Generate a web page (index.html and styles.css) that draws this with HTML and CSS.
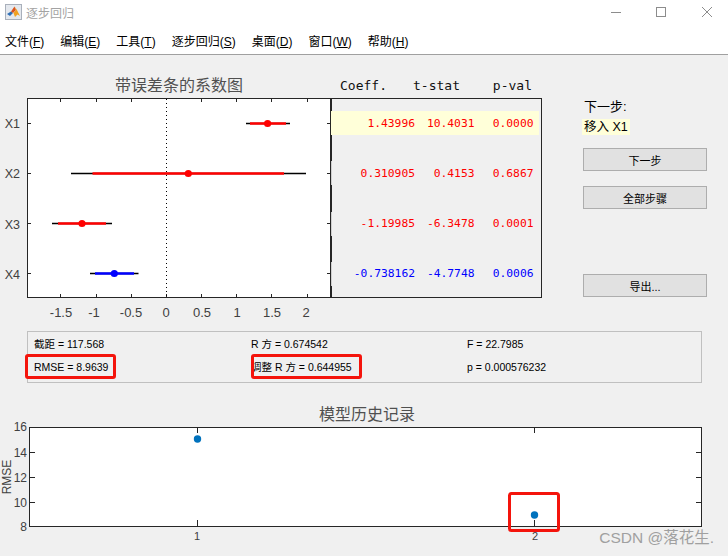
FILE: index.html
```html
<!DOCTYPE html>
<html>
<head>
  <title>逐步回归</title>
  <link rel="stylesheet" href="styles.css">
</head>
<body>
  <div class="titlebar">
    <svg class="appicon" width="17" height="16" viewBox="0 0 17 16">
      <rect x="0.5" y="0.5" width="16" height="15" fill="#e4e8ee" stroke="#a9b0bb"/>
      <polygon points="2,10 6,7.5 8,9 5,12" fill="#2f6fb5"/>
      <polygon points="6,7.5 9.5,2.5 11,6 8,9" fill="#d9531e"/>
      <polygon points="9.5,2.5 12,6 15,12 12.5,10.5 10,13 8.5,9 11,6" fill="#f0a020"/>
    </svg>
    <span class="apptitle">逐步回归</span>
    <svg class="winctl" width="101" height="12" viewBox="0 0 101 12">
      <line x1="0" y1="6.5" x2="10" y2="6.5" stroke="#8c8c8c"/>
      <rect x="45.5" y="1.5" width="9" height="9" fill="none" stroke="#8c8c8c"/>
      <path d="M91 1 L101 11 M101 1 L91 11" stroke="#8c8c8c" fill="none"/>
    </svg>
  </div>

  <div class="menubar">
    <span>文件(<u>F</u>)</span>
    <span>编辑(<u>E</u>)</span>
    <span>工具(<u>T</u>)</span>
    <span>逐步回归(<u>S</u>)</span>
    <span>桌面(<u>D</u>)</span>
    <span>窗口(<u>W</u>)</span>
    <span>帮助(<u>H</u>)</span>
  </div>

  <div class="main">
    <div class="top">
      <svg class="coefplot" width="331" height="250" viewBox="0 75 331 250">
        <text class="plottitle" x="179" y="91" text-anchor="middle">带误差条的系数图</text>
        <rect x="27.5" y="98.5" width="303" height="199" fill="#fff" stroke="#262626"/>

        <path class="tick" d="M60.5 99v3M96.5 99v3M131.5 99v3M201.5 99v3M236.5 99v3M271.5 99v3M307.5 99v3"/>
        <path class="tick" d="M60.5 297v-3M96.5 297v-3M131.5 297v-3M166.5 297v-3M201.5 297v-3M236.5 297v-3M271.5 297v-3M307.5 297v-3"/>
        <path class="tick" d="M28 123.5h3M28 173.5h3M28 223.5h3M28 273.5h3M330 123.5h-3M330 173.5h-3M330 223.5h-3M330 273.5h-3"/>
        <line x1="166.5" y1="99" x2="166.5" y2="297" stroke="#000" stroke-dasharray="1 3"/>

        <line class="ci" x1="246" y1="123.5" x2="290" y2="123.5"/>
        <line class="ci-red" x1="250" y1="123.5" x2="286" y2="123.5"/>
        <circle cx="267.6" cy="123.5" r="3.6" fill="#f00"/>

        <line class="ci" x1="71" y1="173.5" x2="306" y2="173.5"/>
        <line class="ci-red" x1="92.5" y1="173.5" x2="284" y2="173.5"/>
        <circle cx="188.3" cy="173.5" r="3.6" fill="#f00"/>

        <line class="ci" x1="52" y1="223.5" x2="112" y2="223.5"/>
        <line class="ci-red" x1="58" y1="223.5" x2="106" y2="223.5"/>
        <circle cx="82" cy="223.5" r="3.6" fill="#f00"/>

        <line class="ci" x1="90" y1="273.5" x2="138.5" y2="273.5"/>
        <line class="ci-blue" x1="95" y1="273.5" x2="134" y2="273.5"/>
        <circle cx="114.3" cy="273.5" r="3.6" fill="#00f"/>

        <text class="ticklabel rowname" x="20" y="128" text-anchor="end">X1</text>
        <text class="ticklabel rowname" x="20" y="178" text-anchor="end">X2</text>
        <text class="ticklabel rowname" x="20" y="228.5" text-anchor="end">X3</text>
        <text class="ticklabel rowname" x="20" y="278.5" text-anchor="end">X4</text>

        <text class="ticklabel" x="61" y="317" text-anchor="middle">-1.5</text>
        <text class="ticklabel" x="94" y="317" text-anchor="middle">-1</text>
        <text class="ticklabel" x="131" y="317" text-anchor="middle">-0.5</text>
        <text class="ticklabel" x="166" y="317" text-anchor="middle">0</text>
        <text class="ticklabel" x="202" y="317" text-anchor="middle">0.5</text>
        <text class="ticklabel" x="237" y="317" text-anchor="middle">1</text>
        <text class="ticklabel" x="272" y="317" text-anchor="middle">1.5</text>
        <text class="ticklabel" x="306" y="317" text-anchor="middle">2</text>
      </svg>

      <div class="coeftable">
        <div class="coefhead">
          <span>Coeff.</span>
          <span>t-stat</span>
          <span>p-val</span>
        </div>
        <div class="coefpanel">
          <div class="coefrow red selected"><span>1.43996</span><span>10.4031</span><span>0.0000</span></div>
          <div class="coefrow red"><span>0.310905</span><span>0.4153</span><span>0.6867</span></div>
          <div class="coefrow red"><span>-1.19985</span><span>-6.3478</span><span>0.0001</span></div>
          <div class="coefrow blue"><span>-0.738162</span><span>-4.7748</span><span>0.0006</span></div>
        </div>
      </div>

      <div class="sidebar">
        <div class="nextlabel">下一步:</div>
        <div class="nextmove">移入 X1</div>
        <button class="btn">下一步</button>
        <button class="btn">全部步骤</button>
        <button class="btn export">导出...</button>
      </div>
    </div>

    <div class="stats">
      <span>截距 = 117.568</span>
      <span>R 方 = 0.674542</span>
      <span>F = 22.7985</span>
      <span>RMSE = 8.9639</span>
      <span>调整 R 方 = 0.644955</span>
      <span>p = 0.000576232</span>
      <div class="mark mark-rmse"></div>
      <div class="mark mark-adj"></div>
    </div>

    <svg class="history" width="728" height="156" viewBox="0 400 728 156">
      <text class="plottitle" x="367" y="420" text-anchor="middle">模型历史记录</text>
      <rect x="29.5" y="427.5" width="672" height="99" fill="#fff" stroke="#262626"/>
      <path class="tick" d="M30 452.5h5M30 477.5h5M30 502.5h5M701 452.5h-5M701 477.5h-5M701 502.5h-5"/>
      <path class="tick" d="M197.5 428v5M534.5 428v5M197.5 526v-6M534.5 526v-6"/>
      <circle cx="197.5" cy="439" r="3.7" fill="#0072bd"/>
      <circle cx="534.5" cy="515" r="3.7" fill="#0072bd"/>
      <text class="ticklabel axisnum" x="27" y="431" text-anchor="end">16</text>
      <text class="ticklabel axisnum" x="27" y="456.5" text-anchor="end">14</text>
      <text class="ticklabel axisnum" x="27" y="481.5" text-anchor="end">12</text>
      <text class="ticklabel axisnum" x="27" y="506.5" text-anchor="end">10</text>
      <text class="ticklabel axisnum" x="27" y="531" text-anchor="end">8</text>
      <text class="ticklabel small" x="197" y="540" text-anchor="middle">1</text>
      <text class="ticklabel small" x="535" y="540" text-anchor="middle">2</text>
      <text class="ticklabel axisnum" transform="translate(11 477) rotate(-90)" text-anchor="middle">RMSE</text>
      <rect x="509.5" y="493.5" width="49" height="37" rx="2" fill="none" stroke="#f4140c" stroke-width="3"/>
    </svg>

    <div class="watermark">CSDN @落花生.</div>
  </div>
</body>
</html>
```

FILE: styles.css
```css
body {
  margin: 0;
  width: 728px;
  height: 556px;
  overflow: hidden;
  background: #fff;
  font-family: "Liberation Sans", "Noto Sans CJK SC", sans-serif;
}

.titlebar {
  display: flex;
  align-items: center;
  height: 24px;
  padding-left: 5px;
  padding-bottom: 3px;
}

.appicon {
  margin-right: 4px;
}

.apptitle {
  font-size: 12px;
  color: #a3a3a3;
}

.winctl {
  margin-left: auto;
  margin-right: 16px;
}

.menubar {
  display: flex;
  gap: 16px;
  align-items: center;
  height: 27px;
  padding-left: 5px;
  font-size: 12px;
  color: #000;
  border-bottom: 1px solid #a0a0a0;
}

.main {
  position: relative;
  height: 501px;
  background: #f0f0f0;
}

.top {
  display: flex;
  padding-top: 20px;
}

.coefplot, .history {
  display: block;
}

.plottitle {
  font-size: 16px;
  fill: #505050;
}

.ticklabel {
  font-size: 13px;
  fill: #404040;
}

.ticklabel.rowname {
  font-size: 12.5px;
}

.ticklabel.axisnum {
  font-size: 12px;
}

.ticklabel.small {
  font-size: 11px;
}

.tick {
  stroke: #262626;
  fill: none;
}

.ci {
  stroke: #000;
  stroke-width: 1.4;
}

.ci-red {
  stroke: #f00;
  stroke-width: 2.6;
}

.ci-blue {
  stroke: #00f;
  stroke-width: 2.6;
}

.coeftable {
  width: 211px;
}

.coefhead {
  display: grid;
  grid-template-columns: 56px 73px 72px;
  height: 23px;
  font-family: "DejaVu Sans Mono", monospace;
  font-size: 13px;
  line-height: 21px;
  color: #111;
}

.coefhead span {
  text-align: right;
}

.coefpanel {
  display: flex;
  flex-direction: column;
  gap: 26.3px;
  box-sizing: border-box;
  height: 200px;
  padding: 12px 0 0;
  border-left: 2px solid #262626;
  border-right: 1px solid #262626;
  border-bottom: 1px solid #262626;
  border-top: 1px solid #262626;
  margin-left: -1px;
}

.coefrow {
  display: grid;
  grid-template-columns: 83px 59.5px 59px;
  align-items: center;
  height: 24px;
  margin-left: -1px;
  margin-right: 2px;
  border-left: 1px solid #cfcfcf;
  font-family: "DejaVu Sans Mono", monospace;
  font-size: 11.3px;
}

.coefrow span {
  text-align: right;
}

.coefrow.selected {
  background: #ffffd9;
  border-left-color: #ffffd9;
}

.red {
  color: #f00;
}

.blue {
  color: #00f;
}

.sidebar {
  display: flex;
  flex-direction: column;
  align-items: flex-start;
  width: 124px;
  margin-left: 41px;
  padding-top: 23px;
}

.nextlabel {
  height: 17px;
  margin-left: 1px;
  margin-bottom: 4px;
  font-size: 13px;
  line-height: 17px;
  color: #000;
}

.nextmove {
  height: 16px;
  margin-left: -1px;
  margin-bottom: -2px;
  padding: 0 2px;
  background: #ffffd9;
  font-size: 12.5px;
  line-height: 16px;
  color: #000;
}

.btn {
  box-sizing: border-box;
  width: 124px;
  height: 23px;
  margin-top: 15px;
  padding: 0;
  background: #e1e1e1;
  border: 1px solid #adadad;
  font-family: inherit;
  font-size: 11px;
  color: #000;
}

.btn.export {
  margin-top: 65px;
}

.stats {
  position: relative;
  display: grid;
  grid-template-columns: 217px 216px 1fr;
  grid-template-rows: 23px 23px;
  align-items: center;
  box-sizing: border-box;
  width: 675px;
  height: 52px;
  margin: 6px 0 0 27px;
  padding: 0 0 0 6px;
  border: 1px solid #c0c0c0;
  font-size: 10.5px;
  color: #000;
}

.mark {
  position: absolute;
  top: 22px;
  height: 25px;
  box-sizing: border-box;
  border: 3px solid #f4140c;
  border-radius: 3px;
}

.mark-rmse {
  left: -3px;
  width: 91px;
}

.mark-adj {
  left: 223px;
  width: 111px;
}

.history {
  margin-top: 17px;
}

.watermark {
  position: absolute;
  right: 14px;
  bottom: 9px;
  font-size: 15.5px;
  color: #a0a0a0;
}
```
